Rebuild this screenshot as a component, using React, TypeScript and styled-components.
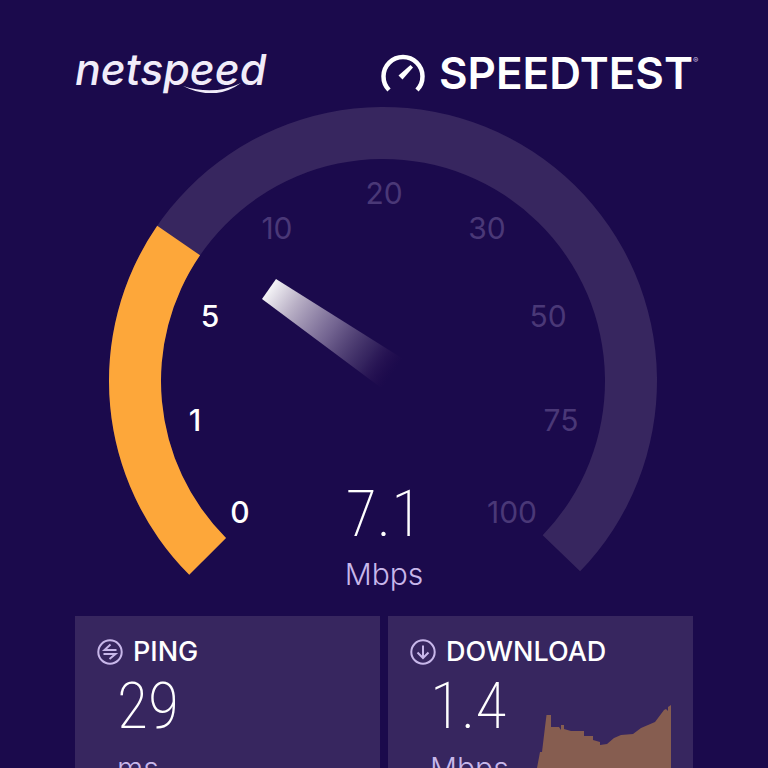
import React from "react";
import styled, { createGlobalStyle } from "styled-components";

const GlobalStyle = createGlobalStyle`
  *, *::before, *::after { box-sizing: border-box; }
  body {
    margin: 0;
    background: #1b0a4c;
    color: #ffffff;
    font-family: Inter, "Open Sans", sans-serif;
  }
`;

const Page = styled.main`
  height: 100vh;
  overflow: hidden;
  padding: 47px 75px 0;
`;

const Header = styled.header`
  display: flex;
  justify-content: space-between;
  align-items: flex-start;
  height: 52px;
`;

const Brand = styled.div`
  position: relative;
  display: flex;
  align-items: center;
`;

const NetspeedName = styled.span`
  font-size: 43px;
  line-height: 44px;
  font-style: italic;
  font-weight: 500;
  color: #f1ecf9;
`;

const Swoosh = styled.svg`
  position: absolute;
  left: 108px;
  bottom: -2px;
  width: 60px;
  height: 10px;
`;

const DialLogo = styled.svg`
  width: 44px;
  height: 40px;
  margin-right: 14px;
`;

const SpeedtestName = styled.span`
  font-size: 44px;
  line-height: 52px;
  font-weight: 600;
`;

const Registered = styled.span`
  position: absolute;
  left: 100%;
  top: 9px;
  font-size: 8px;
  line-height: 8px;
  color: #c9bfe0;
`;

const Gauge = styled.section`
  position: relative;
  margin-top: 7px;
`;

const GaugeChart = styled.svg`
  display: block;
  width: 100%;
  height: auto;
`;

const Tick = styled.text<{ $reached: boolean }>`
  font-size: 30px;
  font-weight: ${(p) => (p.$reached ? 500 : 400)};
  fill: ${(p) => (p.$reached ? "#ffffff" : "#4a3877")};
  text-anchor: middle;
`;

const Readout = styled.div`
  position: absolute;
  left: 0;
  right: 0;
  bottom: 24px;
  display: flex;
  flex-direction: column;
  align-items: center;
  gap: 7px;
`;

const Value = styled.span`
  font-family: "Roboto Condensed", Roboto, sans-serif;
  font-size: 64px;
  line-height: 68px;
  font-weight: 200;
`;

const Unit = styled.span`
  font-size: 30px;
  line-height: 36px;
  font-weight: 300;
  color: #c8b7ea;
`;

const Cards = styled.section`
  display: grid;
  grid-template-columns: 1fr 1fr;
  gap: 8px;
`;

const Card = styled.article`
  padding: 20px 22px 24px;
  background: #37265f;
`;

const CardTitle = styled.h2`
  display: flex;
  align-items: center;
  gap: 10px;
  margin: 0;
  font-size: 27px;
  line-height: 32px;
  font-weight: 500;
`;

const CardIcon = styled.svg`
  width: 26px;
  height: 26px;
  fill: none;
  stroke: #c8b7ea;
  stroke-width: 2;
`;

const CardBody = styled.div`
  display: flex;
  justify-content: space-between;
  align-items: flex-end;
  padding-left: 20px;
`;

const Stat = styled.div`
  display: flex;
  flex-direction: column;
  gap: 9px;
  padding-top: 5px;
`;

const History = styled.svg`
  width: 136px;
  height: 81px;
  fill: #865d50;
`;

const CX = 308;
const CY = 275;
const OUTER = 274;
const INNER = 222;

function point(angle: number, radius: number) {
  const a = (angle * Math.PI) / 180;
  return `${(CX + radius * Math.cos(a)).toFixed(2)} ${(CY + radius * Math.sin(a)).toFixed(2)}`;
}

function band(from: number, to: number) {
  const large = to - from > 180 ? 1 : 0;
  return [
    `M${point(from, OUTER)}`,
    `A${OUTER} ${OUTER} 0 ${large} 1 ${point(to, OUTER)}`,
    `L${point(to, INNER)}`,
    `A${INNER} ${INNER} 0 ${large} 0 ${point(from, INNER)}Z`,
  ].join(" ");
}

const START = 135;
const END = 404;
const CURRENT = 214.5;

const ticks = [
  { label: "0", x: 165, y: 417, reached: true },
  { label: "1", x: 120, y: 325, reached: true },
  { label: "5", x: 135, y: 221, reached: true },
  { label: "10", x: 202, y: 133, reached: false },
  { label: "20", x: 309, y: 98, reached: false },
  { label: "30", x: 412, y: 133, reached: false },
  { label: "50", x: 473, y: 221, reached: false },
  { label: "75", x: 486, y: 325, reached: false },
  { label: "100", x: 437, y: 417, reached: false },
];

export default function App() {
  return (
    <>
      <GlobalStyle />
      <Page>
        <Header>
          <Brand>
            <NetspeedName>netspeed</NetspeedName>
            <Swoosh viewBox="0 0 60 10" aria-hidden="true">
              <path d="M0 3Q31 13 58 0Q32 19 0 3Z" fill="#f1ecf9" />
            </Swoosh>
          </Brand>
          <Brand>
            <DialLogo viewBox="0 0 44 40" aria-hidden="true">
              <path
                d="M8 37A19.5 19.5 0 1 1 36 37"
                fill="none"
                stroke="#fff"
                strokeWidth="4.5"
              />
              <path d="M17.500 22.500L29.500 12L32 14.500L21.500 26.500Z" fill="#fff" />
            </DialLogo>
            <SpeedtestName>SPEEDTEST</SpeedtestName>
            <Registered>®</Registered>
          </Brand>
        </Header>

        <Gauge aria-label="Download speed">
          <GaugeChart viewBox="0 0 618 510">
            <defs>
              <linearGradient
                id="needle"
                gradientUnits="userSpaceOnUse"
                x1="194"
                y1="184"
                x2="316"
                y2="270"
              >
                <stop offset="0" stopColor="#fff" stopOpacity="0.95" />
                <stop offset="0.2" stopColor="#f0eaf0" stopOpacity="0.74" />
                <stop offset="0.5" stopColor="#d8cce0" stopOpacity="0.46" />
                <stop offset="0.8" stopColor="#b0a0b8" stopOpacity="0.17" />
                <stop offset="1" stopColor="#602060" stopOpacity="0" />
              </linearGradient>
            </defs>
            <path d={band(START, END)} fill="#37265f" />
            <path d={band(START, CURRENT)} fill="#fda73a" />
            <path d="M201 173L333 256L313 287L187 193Z" fill="url(#needle)" />
            {ticks.map((t) => (
              <Tick key={t.label} x={t.x} y={t.y} $reached={t.reached}>
                {t.label}
              </Tick>
            ))}
          </GaugeChart>
          <Readout>
            <Value>7.1</Value>
            <Unit>Mbps</Unit>
          </Readout>
        </Gauge>

        <Cards>
          <Card>
            <CardTitle>
              <CardIcon viewBox="0 0 26 26" aria-hidden="true">
                <circle cx="13" cy="13" r="11.7" />
                <path d="M19.500 11H7.500L13.500 5.500M6.500 15H18.500L12.500 20" />
              </CardIcon>
              PING
            </CardTitle>
            <CardBody>
              <Stat>
                <Value>29</Value>
                <Unit>ms</Unit>
              </Stat>
            </CardBody>
          </Card>
          <Card>
            <CardTitle>
              <CardIcon viewBox="0 0 26 26" aria-hidden="true">
                <circle cx="13" cy="13" r="11.7" />
                <path d="M13 6.500V19M7.500 13.500L13 19L18.500 13.500" />
              </CardIcon>
              DOWNLOAD
            </CardTitle>
            <CardBody>
              <Stat>
                <Value>1.4</Value>
                <Unit>Mbps</Unit>
              </Stat>
              <History viewBox="0 0 136 81" aria-hidden="true">
                <path d="M0 81L2 63L5 47H7L10 22L11.500 10H16V22H24L26 25V20H29V24L36 26H49V31H58V35L65 37V40L72 39L79 33L86 30L98 29L106 23L120 17L129 5L131 4L133 6V2L136 0V81Z" />
              </History>
            </CardBody>
          </Card>
        </Cards>
      </Page>
    </>
  );
}
